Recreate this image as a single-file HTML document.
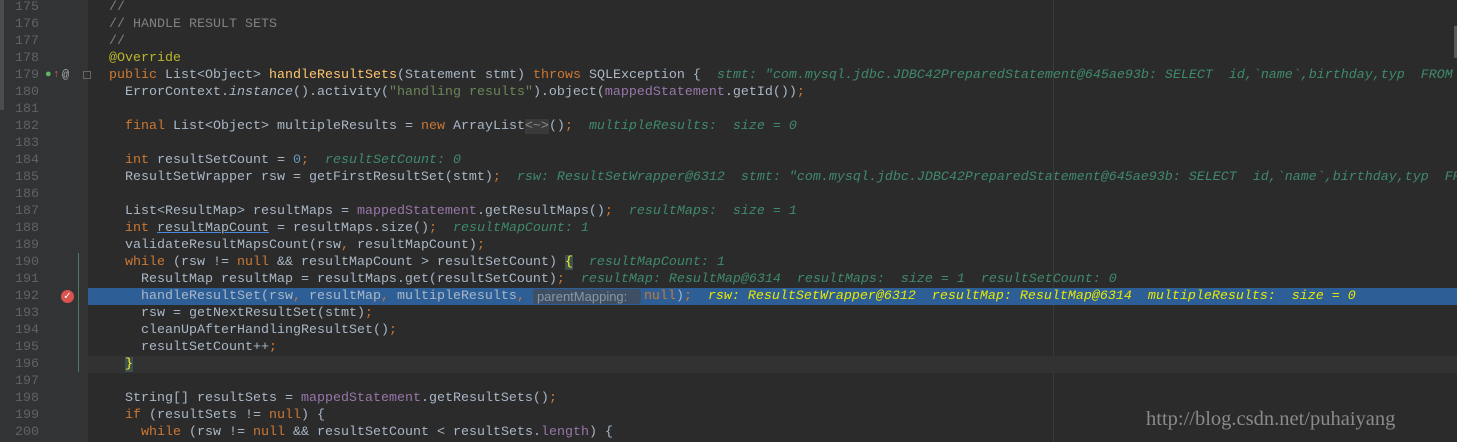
<!DOCTYPE html>
<html><head><meta charset="utf-8"><style>
body{margin:0;width:1457px;height:442px;overflow:hidden;background:#2b2b2b;font-family:"Liberation Mono",monospace;font-size:13.33px;position:relative}
.g{position:absolute;left:0;top:0;width:88px;height:442px;background:#313335}
.sb{position:absolute;left:0;top:0;width:4px;height:110px;background:#4a4c4e}
.rm{position:absolute;left:1053px;top:0;width:1px;height:442px;background:#3a3a3a}
.l{position:absolute;left:0;width:1457px;height:17px;line-height:17px;white-space:pre}
.num{position:absolute;left:0;width:39px;text-align:right;color:#606366}
.code{position:absolute;left:109px;color:#a9b7c6}
.k{color:#cc7832}.c{color:#808080}.a{color:#bbb529}.f{color:#ffc66d}.s{color:#6a8759}.p{color:#9876aa}.n{color:#6897bb}.it{font-style:italic}
.v{color:#3f8a6b;font-style:italic}
.sel{background:#2d5e96}
.sel .v{color:#e8e800}
.cur{background:#323232}
.hint{display:inline-block;width:108px;height:15px;line-height:15px;vertical-align:top;margin-top:1px;margin-right:3px;background:#3e4f63;color:#8a96a3;border-radius:3px;padding-left:4px;box-sizing:border-box;font-family:"Liberation Sans",sans-serif;font-size:13px;overflow:hidden}
.wm{position:absolute;left:1146px;top:408px;font-family:"Liberation Serif",serif;font-size:20.5px;color:#8a8a8a}
</style></head><body>
<div class="g"></div><div class="sb"></div><div class="rm"></div>
<div style="position:absolute;left:1454px;top:26px;width:3px;height:32px;background:#5a5a5a"></div>
<div style="position:absolute;left:78px;top:253px;width:1px;height:119px;background:#4c7a5e"></div>

<div class="l" style="top:-1px"><span class="num">175</span><span class="code"><span class="c">//</span></span></div>
<div class="l" style="top:16px"><span class="num">176</span><span class="code"><span class="c">// HANDLE RESULT SETS</span></span></div>
<div class="l" style="top:33px"><span class="num">177</span><span class="code"><span class="c">//</span></span></div>
<div class="l" style="top:50px"><span class="num">178</span><span class="code"><span class="a">@Override</span></span></div>
<div class="l" style="top:67px"><span class="num">179</span><span style="position:absolute;left:45px;color:#5fb85f;font-size:11px">●</span><span style="position:absolute;left:53px;color:#e05555;font-size:11px">↑</span><span style="position:absolute;left:62px;color:#aaa;font-size:12px">@</span><span style="position:absolute;left:83px;top:4px;width:8px;height:8px;border:1px solid #666;box-sizing:border-box"></span><span class="code"><span class="k">public </span>List&lt;Object&gt; <span class="f">handleResultSets</span>(Statement stmt) <span class="k">throws </span>SQLException {  <span class="v">stmt: "com.mysql.jdbc.JDBC42PreparedStatement@645ae93b: SELECT  id,`name`,birthday,typ  FROM</span></span></div>
<div class="l" style="top:84px"><span class="num">180</span><span class="code">  ErrorContext.<span class="it">instance</span>().activity(<span class="s">"handling results"</span>).object(<span class="p">mappedStatement</span>.getId())<span class="k">;</span></span></div>
<div class="l" style="top:101px"><span class="num">181</span></div>
<div class="l" style="top:118px"><span class="num">182</span><span class="code">  <span class="k">final </span>List&lt;Object&gt; multipleResults = <span class="k">new </span>ArrayList<span style="background:#3a3a3a;color:#8a8a8a">&lt;~&gt;</span>()<span class="k">;</span>  <span class="v">multipleResults:  size = 0</span></span></div>
<div class="l" style="top:135px"><span class="num">183</span></div>
<div class="l" style="top:152px"><span class="num">184</span><span class="code">  <span class="k">int </span>resultSetCount = <span class="n">0</span><span class="k">;</span>  <span class="v">resultSetCount: 0</span></span></div>
<div class="l" style="top:169px"><span class="num">185</span><span class="code">  ResultSetWrapper rsw = getFirstResultSet(stmt)<span class="k">;</span>  <span class="v">rsw: ResultSetWrapper@6312  stmt: "com.mysql.jdbc.JDBC42PreparedStatement@645ae93b: SELECT  id,`name`,birthday,typ  FROM</span></span></div>
<div class="l" style="top:186px"><span class="num">186</span></div>
<div class="l" style="top:203px"><span class="num">187</span><span class="code">  List&lt;ResultMap&gt; resultMaps = <span class="p">mappedStatement</span>.getResultMaps()<span class="k">;</span>  <span class="v">resultMaps:  size = 1</span></span></div>
<div class="l" style="top:220px"><span class="num">188</span><span class="code">  <span class="k">int </span><span style="text-decoration:underline;text-decoration-color:#4a88e0">resultMapCount</span> = resultMaps.size()<span class="k">;</span>  <span class="v">resultMapCount: 1</span></span></div>
<div class="l" style="top:237px"><span class="num">189</span><span class="code">  validateResultMapsCount(rsw<span class="k">, </span>resultMapCount)<span class="k">;</span></span></div>
<div class="l" style="top:254px"><span class="num">190</span><span class="code">  <span class="k">while </span>(rsw != <span class="k">null </span>&amp;&amp; resultMapCount &gt; resultSetCount) <span style="background:#3b514d;color:#ffef28">{</span>  <span class="v">resultMapCount: 1</span></span></div>
<div class="l" style="top:271px"><span class="num">191</span><span class="code">    ResultMap resultMap = resultMaps.get(resultSetCount)<span class="k">;</span>  <span class="v">resultMap: ResultMap@6314  resultMaps:  size = 1  resultSetCount: 0</span></span></div>
<div class="l" style="top:288px"><span class="num">192</span><span style="position:absolute;left:88px;width:1369px;height:17px" class="sel"></span><span style="position:absolute;left:61px;top:2px;width:13px;height:13px;border-radius:50%;background:#d9534f;color:#fff;font-size:10px;line-height:13px;text-align:center;font-family:'DejaVu Sans',sans-serif">✓</span><span class="code sel">    handleResultSet(rsw<span class="k">, </span>resultMap<span class="k">, </span>multipleResults<span class="k">, </span><span class="hint">parentMapping:</span><span class="k">null</span>)<span class="k">;</span>  <span class="v">rsw: ResultSetWrapper@6312  resultMap: ResultMap@6314  multipleResults:  size = 0</span></span></div>
<div class="l" style="top:305px"><span class="num">193</span><span class="code">    rsw = getNextResultSet(stmt)<span class="k">;</span></span></div>
<div class="l" style="top:322px"><span class="num">194</span><span class="code">    cleanUpAfterHandlingResultSet()<span class="k">;</span></span></div>
<div class="l" style="top:339px"><span class="num">195</span><span class="code">    resultSetCount++<span class="k">;</span></span></div>
<div class="l" style="top:356px"><span style="position:absolute;left:88px;width:1369px;height:17px" class="cur"></span><span class="num">196</span><span class="code">  <span style="background:#3b514d;color:#ffef28">}</span></span></div>
<div class="l" style="top:373px"><span class="num">197</span></div>
<div class="l" style="top:390px"><span class="num">198</span><span class="code">  String[] resultSets = <span class="p">mappedStatement</span>.getResultSets()<span class="k">;</span></span></div>
<div class="l" style="top:407px"><span class="num">199</span><span class="code">  <span class="k">if </span>(resultSets != <span class="k">null</span>) {</span></div>
<div class="l" style="top:424px"><span class="num">200</span><span class="code">    <span class="k">while </span>(rsw != <span class="k">null </span>&amp;&amp; resultSetCount &lt; resultSets.<span class="p">length</span>) {</span></div>
<div class="wm">http://blog.csdn.net/puhaiyang</div>
</body></html>
